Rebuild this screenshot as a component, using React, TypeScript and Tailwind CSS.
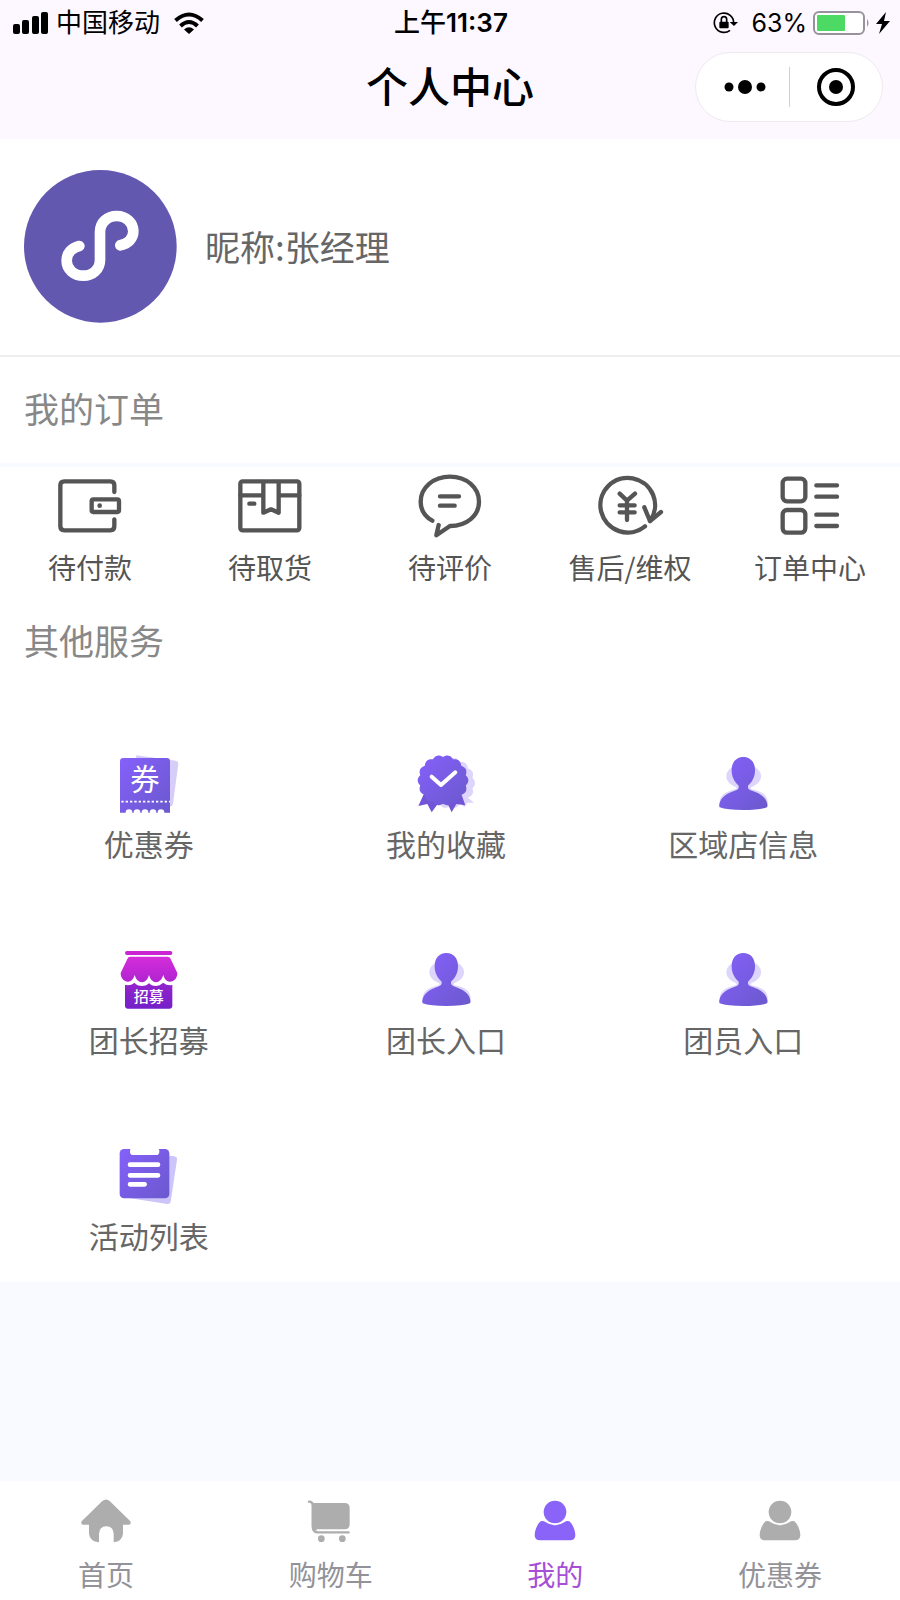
import { ReactNode, useState } from "react";

interface Entry {
  label: string;
  icon: ReactNode;
}

interface Tab extends Entry {
  id: string;
}

function LineIcon({ children }: { children: ReactNode }) {
  return (
    <svg
      viewBox="0 0 216 216"
      className="size-[72px]"
      fill="none"
      stroke="currentColor"
      strokeWidth="13"
      strokeLinecap="round"
      strokeLinejoin="round"
      aria-hidden="true"
    >
      {children}
    </svg>
  );
}

function ServiceIcon({ children }: { children: ReactNode }) {
  return (
    <svg viewBox="0 0 180 180" className="size-[60px]" aria-hidden="true">
      {children}
    </svg>
  );
}

function PersonIcon() {
  return (
    <ServiceIcon>
      <ellipse cx="92" cy="64" rx="52" ry="36" fill="#ddd5fb" />
      <path d="M70 88h44v14c24 6 48 12 50 38v14H20v-14c2-24 26-32 50-38z" fill="#ddd5fb" />
      <path
        d="M91 6C113 6 127 23 126 47C126 65 117 81 106 91C103 97 106 103 113 106C140 115 160 126 163 148Q164 153 162 157Q140 165 91 165Q42 165 20 157Q18 153 19 148C23 126 42 115 69 106C77 103 79 97 76 91C65 81 56 65 56 47C55 23 69 6 91 6Z"
        fill="url(#violet)"
      />
    </ServiceIcon>
  );
}

// wavy-edged disc used for the medal
function badgePath(cx: number, cy: number) {
  const pts: string[] = [];
  for (let i = 0; i <= 168; i++) {
    const a = (i / 168) * Math.PI * 2;
    const r = 70 + 6 * Math.abs(Math.cos(a * 7));
    pts.push(`${(cx + r * Math.cos(a)).toFixed(1)} ${(cy + r * Math.sin(a)).toFixed(1)}`);
  }
  return `M${pts.join("L")}Z`;
}

const orders: Entry[] = [
  {
    label: "待付款",
    icon: (
      <LineIcon>
        <path d="M181 66V46q0-12-12-12H31q-12 0-12 12v123q0 12 12 12h138q12 0 12-12v-21" />
        <rect x="113" y="88" width="82" height="38" rx="5" />
        <circle cx="137" cy="107" r="7" fill="currentColor" stroke="none" />
      </LineIcon>
    ),
  },
  {
    label: "待取货",
    icon: (
      <LineIcon>
        <rect x="19" y="34" width="177" height="147" rx="7" />
        <path d="M19 76h69M134 76h62M88 36v92l23-10 23 10V36M46 101h15" />
      </LineIcon>
    ),
  },
  {
    label: "待评价",
    icon: (
      <LineIcon>
        <path d="M55 152C33 140 20 119 20 95C20 53 58 20 108 20S195 53 195 95S158 168 108 168L67 196L74 165" />
        <path d="M78 79h57M78 107h44" />
      </LineIcon>
    ),
  },
  {
    label: "售后/维权",
    icon: (
      <LineIcon>
        <path d="M153 169A82 82 0 1 1 168 153" />
        <path d="M151 112l17 41 33-27M77 71l22 21 24-21M99 92v58M77 106h45M77 127h45" />
      </LineIcon>
    ),
  },
  {
    label: "订单中心",
    icon: (
      <LineIcon>
        <rect x="26" y="26" width="68" height="68" rx="13" />
        <rect x="26" y="120" width="68" height="68" rx="13" />
        <path d="M127 46h62M127 80h62M127 134h62M127 168h62" />
      </LineIcon>
    ),
  },
];

const services: Entry[] = [
  {
    label: "优惠券",
    icon: (
      <ServiceIcon>
        <path d="M52 1L170 17Q179 19 178 27L162 146Q161 154 153 155L40 130Z" fill="#d6cdf8" />
        <path
          d="M13 9H143Q153 9 153 19V173H136a10 10 0 0 0-20 0H112a10 10 0 0 0-20 0H88a10 10 0 0 0-20 0H64a10 10 0 0 0-20 0H40a10 10 0 0 0-20 0H3V19Q3 9 13 9Z"
          fill="url(#violet)"
        />
        <path d="M7 140H153" stroke="#fff" strokeWidth="5" strokeDasharray="7 6" />
        <text x="78" y="106" fontSize="88" fill="#fff" textAnchor="middle">
          券
        </text>
      </ServiceIcon>
    ),
  },
  {
    label: "我的收藏",
    icon: (
      <ServiceIcon>
        <path d={badgePath(101, 84)} fill="#ddd5fb" />
        <path d="M140 115l34 28-20 0-9 14-30-30z" fill="#ddd5fb" />
        <path d="M26 112L7 153L34 147L47 172L76 132Z" fill="#7254d6" />
        <path d="M134 112L148 151L121 147L107 172L88 132Z" fill="#7254d6" />
        <path d={badgePath(81, 76)} fill="url(#violet)" />
        <path
          d="M47 65l28 25 43-38"
          fill="none"
          stroke="#fff"
          strokeWidth="12"
          strokeLinecap="round"
          strokeLinejoin="round"
        />
      </ServiceIcon>
    ),
  },
  { label: "区域店信息", icon: <PersonIcon /> },
  {
    label: "团长招募",
    icon: (
      <ServiceIcon>
        <path d="M18 80H160V164Q160 173 151 173H27Q18 173 18 164Z" fill="url(#shopBase)" />
        <path
          d="M33 17H146Q152 17 155 24L175 66C175 82 165 92 153 92Q138 92 133 72Q126 94 111 94Q96 94 90 72Q84 94 69 94Q53 94 47 72Q41 92 27 92C15 92 5 82 5 66L25 24Q28 17 33 17Z"
          fill="url(#awning)"
          stroke="#fff"
          strokeWidth="22"
          strokeLinejoin="round"
          paintOrder="stroke"
        />
        <rect x="18" y="0" width="142" height="12" rx="6" fill="#c923d3" />
        <text x="89" y="153" fontSize="45" fontWeight="500" fill="#fff" textAnchor="middle">
          招募
        </text>
      </ServiceIcon>
    ),
  },
  { label: "团长入口", icon: <PersonIcon /> },
  { label: "团员入口", icon: <PersonIcon /> },
  {
    label: "活动列表",
    icon: (
      <ServiceIcon>
        <path d="M151 26L166 28Q175 30 174 38L155 164Q153 172 145 171L34 154Z" fill="#cbc5fa" />
        <rect x="2" y="6" width="149" height="148" rx="13" fill="url(#violet)" />
        <rect x="33" y="2" width="88" height="22" rx="10" fill="#fff" />
        <path d="M33 53h84M33 85h84M33 112h44" stroke="#fff" strokeWidth="14" strokeLinecap="round" />
      </ServiceIcon>
    ),
  },
];

const userIcon = (
  <svg viewBox="0 0 126 126" className="size-[42px]" fill="currentColor" aria-hidden="true">
    <circle cx="63" cy="36" r="34" />
    <path d="M20 64Q28 61 34 66Q63 86 92 66Q98 61 106 64C116 72 124 92 124 105Q124 121 108 121H18Q2 121 2 105C2 92 10 72 20 64Z" />
  </svg>
);

const tabs: Tab[] = [
  {
    id: "home",
    label: "首页",
    icon: (
      <svg viewBox="0 0 150 132" className="h-[44px] w-[50px]" fill="currentColor" aria-hidden="true">
        <path d="M64 6Q75-3 86 6L148 67Q152 76 143 77H126V104Q124 126 98 130V104Q97 83 76 82Q55 83 54 104V130Q26 126 24 104V77H7Q-2 76 2 67Z" />
      </svg>
    ),
  },
  {
    id: "cart",
    label: "购物车",
    icon: (
      <svg viewBox="5 0 132 132" className="size-[44px] overflow-visible" fill="currentColor" aria-hidden="true">
        <path d="M16 12H112Q127 12 127 28V76Q127 91 112 91H30Q26 91 28 95L14 91Z" />
        <path
          d="M5 8Q16 8 16 18V82Q17 100 32 100H124"
          fill="none"
          stroke="currentColor"
          strokeWidth="7"
          strokeLinecap="round"
        />
        <circle cx="42" cy="119" r="10" />
        <circle cx="105" cy="119" r="10" />
      </svg>
    ),
  },
  { id: "mine", label: "我的", icon: userIcon },
  { id: "coupon", label: "优惠券", icon: userIcon },
];

function Gradients() {
  return (
    <svg className="absolute size-0" aria-hidden="true">
      <defs>
        <linearGradient id="violet" x1="0" y1="0" x2="1" y2="1">
          <stop offset="0" stopColor="#8560fb" />
          <stop offset="1" stopColor="#6b59cd" />
        </linearGradient>
        <linearGradient id="awning" x1="0" y1="0" x2="0" y2="1">
          <stop offset="0" stopColor="#d52ddb" />
          <stop offset="1" stopColor="#b023d0" />
        </linearGradient>
        <linearGradient id="shopBase" x1="0" y1="0" x2="0" y2="1">
          <stop offset="0" stopColor="#9a24cc" />
          <stop offset="1" stopColor="#7420c8" />
        </linearGradient>
      </defs>
    </svg>
  );
}

function StatusBar() {
  return (
    <div className="grid h-[46px] grid-cols-[1fr_auto_1fr] items-center pr-2.5 pl-3 font-['Inter','Noto_Sans_CJK_SC',sans-serif] text-[26px] leading-[38px] text-black">
      <div className="flex items-center">
        <svg viewBox="0 0 36 22" className="h-[22px] w-9" aria-hidden="true">
          <rect x="1" y="12" width="7" height="10" rx="2" />
          <rect x="10" y="8" width="7" height="14" rx="2" />
          <rect x="20" y="4" width="7" height="18" rx="2" />
          <rect x="29" y="0" width="7" height="22" rx="2" />
        </svg>
        <span className="ml-2">中国移动</span>
        <svg viewBox="0 0 30 22" className="ml-3.5 h-[22px] w-[30px]" fill="none" stroke="#000" strokeWidth="4" aria-hidden="true">
          <path d="M1.500 8.500Q15-3.500 28.500 8.500M6.500 14Q15 6 23.500 14" />
          <path d="M10 17.500Q15 13 20 17.500L15 22Z" fill="#000" stroke="none" />
        </svg>
      </div>
      <div className="font-medium">
        上午<span className="font-semibold">11:37</span>
      </div>
      <div className="flex items-center justify-end">
        <svg viewBox="0 0 75 66" className="mr-3.5 h-[22px] w-[25px]" fill="none" stroke="#000" strokeWidth="5" aria-hidden="true">
          <path d="M51 55A29 29 0 1 1 62 33" />
          <path d="M50 30H75L63 42Z" fill="#000" stroke="none" />
          <rect x="19" y="29" width="28" height="20" rx="3" fill="#000" stroke="none" />
          <path d="M25 30V22a8 8 0 0 1 16 0v8" />
        </svg>
        <span className="text-[25px]">63%</span>
        <svg viewBox="0 0 57 24" className="ml-1.5 h-6 w-[57px]" aria-hidden="true">
          <rect x="1" y="1" width="50" height="22" rx="5" fill="#fff" stroke="#98929c" strokeWidth="2" />
          <rect x="4" y="4" width="28" height="16" rx="1" fill="#4cd964" />
          <path d="M54 8q3 4 0 8z" fill="#98929c" />
        </svg>
        <svg viewBox="0 0 14 22" className="ml-1.5 h-[22px] w-3.5" aria-hidden="true">
          <path d="M10 0L0 12H6L3 22L14 9H8Z" />
        </svg>
      </div>
    </div>
  );
}

function NavBar() {
  return (
    <div className="grid h-[93px] grid-cols-[1fr_auto_1fr] items-start pt-1.5 pr-[17px] pl-[17px]">
      <h1 className="col-start-2 text-[42px] leading-[66px] font-medium text-black">个人中心</h1>
      <div className="flex h-[70px] w-[188px] items-center justify-self-end rounded-full border border-[#eeeaf0] bg-white">
        <button className="flex h-full w-1/2 items-center justify-center pl-1.5" aria-label="更多">
          <svg viewBox="0 0 42 16" className="h-4 w-[42px]" aria-hidden="true">
            <circle cx="5" cy="8" r="4.500" />
            <circle cx="21" cy="8" r="7" />
            <circle cx="37" cy="8" r="4.500" />
          </svg>
        </button>
        <span className="h-10 w-px bg-[#d2d0d4]" />
        <button className="flex h-full w-1/2 items-center justify-center" aria-label="关闭">
          <svg viewBox="0 0 38 38" className="size-[38px]" aria-hidden="true">
            <circle cx="19" cy="19" r="17" fill="none" stroke="#000" strokeWidth="4" />
            <circle cx="19" cy="19" r="7" />
          </svg>
        </button>
      </div>
    </div>
  );
}

export default function App() {
  const [active, setActive] = useState("mine");

  return (
    <div className="flex min-h-screen flex-col bg-[#f9faff] font-['Noto_Sans_CJK_SC',sans-serif]">
      <Gradients />
      <header className="bg-[#fdf8ff]">
        <StatusBar />
        <NavBar />
      </header>

      <main className="bg-white">
        <section className="flex h-[218px] items-center gap-7 border-b-2 border-[#eeeeee] px-6 pb-0.5">
          <svg viewBox="0 0 459 459" className="size-[153px]" role="img" aria-label="头像">
            <circle cx="229" cy="229" r="229" fill="#6258b0" />
            <path
              d="M166 228C142 234 128 250 128 272C128 298 150 317 178 317C206 317 228 298 228 270V186C228 158 250 138 278 138C306 138 328 158 328 184C328 206 312 221 289 226"
              fill="none"
              stroke="#fff"
              strokeWidth="32"
              strokeLinecap="round"
            />
          </svg>
          <p className="text-[35px] leading-[50px] text-[#666666]">昵称:张经理</p>
        </section>

        <h2 className="border-b-4 border-[#f9faff] px-6 pt-6.5 pb-7.5 text-[35px] leading-[50px] text-[#888888]">我的订单</h2>
        <nav className="grid grid-cols-5 pt-[3px]">
          {orders.map((o) => (
            <button key={o.label} className="flex flex-col items-center gap-[5px] text-[#555555]">
              {o.icon}
              <span className="text-[28px] leading-10">{o.label}</span>
            </button>
          ))}
        </nav>

        <h2 className="px-6 pt-7 text-[35px] leading-[50px] text-[#888888]">其他服务</h2>
        <nav className="grid grid-cols-3 gap-y-[88px] pt-[90px] pr-2 pb-[27px]">
          {services.map((s) => (
            <button key={s.label} className="flex flex-col items-center gap-2">
              {s.icon}
              <span className="text-[30px] leading-10 text-[#666666]">{s.label}</span>
            </button>
          ))}
        </nav>
      </main>

      <footer className="mt-auto flex h-[119px] justify-between bg-white pt-[17px] pr-[78px] pl-16">
        {tabs.map((t) => (
          <button
            key={t.id}
            onClick={() => setActive(t.id)}
            className={`flex w-[84px] flex-col items-center ${active === t.id ? "text-[#8a63f8]" : "text-[#adadad]"}`}
          >
            <span className="flex h-[46px] items-center">{t.icon}</span>
            <span
              className={`mt-2.5 text-[28px] leading-10 whitespace-nowrap ${
                active === t.id ? "text-[#a64fd6]" : "text-[#929298]"
              }`}
            >
              {t.label}
            </span>
          </button>
        ))}
      </footer>
    </div>
  );
}
